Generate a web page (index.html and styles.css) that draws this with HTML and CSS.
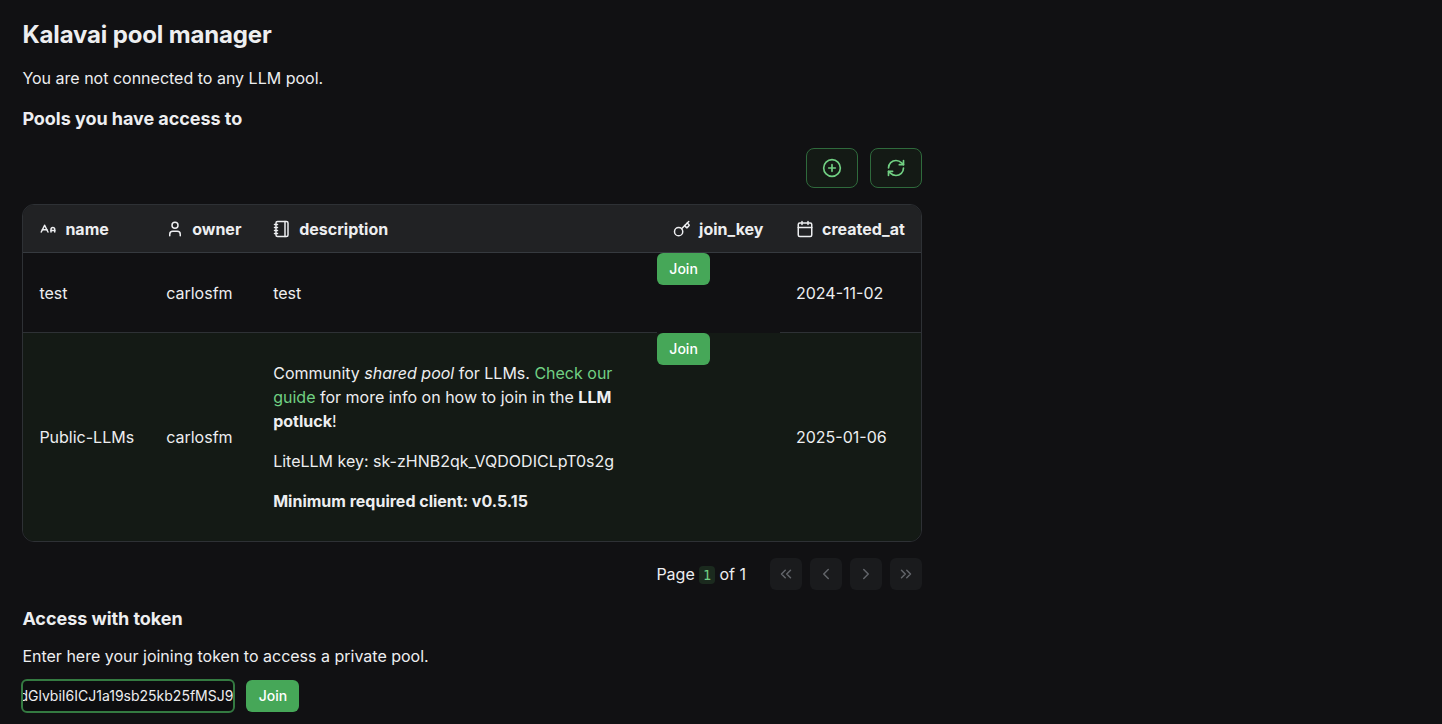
FILE: index.html
```html
<!DOCTYPE html>
<html lang="en">
<head>
<meta charset="utf-8">
<title>Kalavai pool manager</title>
<link rel="stylesheet" href="styles.css">
</head>
<body>
<main class="page">
  <h1 class="title">Kalavai pool manager</h1>
  <p class="status">You are not connected to any LLM pool.</p>
  <h2 class="section">Pools you have access to</h2>
  <div class="toolbar">
    <button class="tool" aria-label="Add"><svg class="icon20" viewBox="0 0 24 24"><circle cx="12" cy="12" r="10"/><path d="M8 12h8M12 8v8"/></svg></button>
    <button class="tool" aria-label="Refresh"><svg class="icon20" viewBox="0 0 24 24"><path d="M3 12a9 9 0 0 1 9-9 9.75 9.75 0 0 1 6.74 2.74L21 8"/><path d="M21 3v5h-5"/><path d="M21 12a9 9 0 0 1-9 9 9.75 9.75 0 0 1-6.74-2.74L3 16"/><path d="M8 16H3v5"/></svg></button>
  </div>
  <div class="table">
    <div class="row head">
      <div class="cell"><svg class="icon18" viewBox="0 0 24 24"><path d="M21 14h-5"/><path d="M16 16v-3.5a2.5 2.5 0 0 1 5 0V16"/><path d="M4.5 13h6"/><path d="m3 16 4.5-9 4.5 9"/></svg><span>name</span></div>
      <div class="cell"><svg class="icon18" viewBox="0 0 24 24"><path d="M19 21v-2a4 4 0 0 0-4-4H9a4 4 0 0 0-4 4v2"/><circle cx="12" cy="7" r="4"/></svg><span>owner</span></div>
      <div class="cell"><svg class="icon18" viewBox="0 0 24 24"><path d="M2 6h4M2 10h4M2 14h4M2 18h4"/><rect width="16" height="20" x="4" y="2" rx="2"/><path d="M16 2v20"/></svg><span>description</span></div>
      <div class="cell"><svg class="icon18" viewBox="0 0 24 24"><path d="m15.5 7.5 2.3 2.3a1 1 0 0 0 1.4 0l2.1-2.1a1 1 0 0 0 0-1.4L19 4"/><path d="m21 2-9.6 9.6"/><circle cx="7.5" cy="15.5" r="5.5"/></svg><span>join_key</span></div>
      <div class="cell"><svg class="icon18" viewBox="0 0 24 24"><path d="M8 2v4M16 2v4"/><rect width="18" height="18" x="3" y="4" rx="2"/><path d="M3 10h18"/></svg><span>created_at</span></div>
    </div>
    <div class="row first">
      <div class="cell">test</div>
      <div class="cell">carlosfm</div>
      <div class="cell">test</div>
      <div class="action"><button class="join">Join</button></div>
      <div class="cell">2024-11-02</div>
    </div>
    <div class="row selected">
      <div class="cell">Public-LLMs</div>
      <div class="cell">carlosfm</div>
      <div class="cell prose">
        <p>Community <em>shared pool</em> for LLMs. <a class="link">Check our guide</a> for more info on how to join in the <strong>LLM potluck</strong>!</p>
        <p>LiteLLM key: sk-zHNB2qk_VQDODICLpT0s2g</p>
        <p><strong>Minimum required client: v0.5.15</strong></p>
      </div>
      <div class="action"><button class="join">Join</button></div>
      <div class="cell">2025-01-06</div>
    </div>
  </div>
  <div class="pager">
    <span class="pages">Page <code class="num">1</code> of 1</span>
    <button class="nav" aria-label="First"><svg class="icon18" viewBox="0 0 24 24"><path d="m11 17-5-5 5-5M18 17l-5-5 5-5"/></svg></button>
    <button class="nav" aria-label="Previous"><svg class="icon18" viewBox="0 0 24 24"><path d="m15 18-6-6 6-6"/></svg></button>
    <button class="nav" aria-label="Next"><svg class="icon18" viewBox="0 0 24 24"><path d="m9 18 6-6-6-6"/></svg></button>
    <button class="nav" aria-label="Last"><svg class="icon18" viewBox="0 0 24 24"><path d="m6 17 5-5-5-5M13 17l5-5-5-5"/></svg></button>
  </div>
  <h2 class="section access">Access with token</h2>
  <p class="hint">Enter here your joining token to access a private pool.</p>
  <div class="token-row">
    <div class="token"><span>dGlvbiI6ICJ1a19sb25kb25fMSJ9</span></div>
    <button class="join">Join</button>
  </div>
</main>
</body>
</html>
```
FILE: styles.css
```css
* { box-sizing: border-box; }
body {
  margin: 0;
  height: 724px;
  overflow: hidden;
  background: #111113;
  color: #edeef0;
  font: 400 16px/24px Inter, sans-serif;
}
h1, h2, p { margin: 0; }
button { font-family: inherit; margin: 0; padding: 0; border: 0; }
svg { fill: none; stroke: currentColor; stroke-width: 2; stroke-linecap: round; stroke-linejoin: round; flex: none; }
.icon18 { width: 18px; height: 18px; }
.icon20 { width: 20px; height: 20px; }
.page { width: 922.4px; padding: 20px 0 0 22.4px; }
.title { font-size: 24px; line-height: 30px; font-weight: 700; letter-spacing: -0.15px; }
.status { margin-top: 16px; }
.section { margin-top: 16px; font-size: 18px; line-height: 26px; font-weight: 700; letter-spacing: -0.045px; }
.toolbar { display: flex; justify-content: flex-end; gap: 12px; margin-top: 16px; }
.tool {
  display: flex; align-items: center; justify-content: center;
  width: 52px; height: 40px;
  color: #71d083;
  background: #141a15;
  border: 1px solid #2f6a3c;
  border-radius: 8px;
}
.table { margin-top: 16px; border: 1px solid #2e3135; border-radius: 12px; overflow: hidden; }
.row { display: grid; grid-template-columns: 126.8px 107px 399.9px 122.9px 141.4px; }
.cell { display: flex; align-items: center; padding: 12px 16px; }
.head { height: 48px; background: #212224; font-weight: 700; border-bottom: 1px solid #363a3f; }
.head .cell { gap: 8px; padding: 12px 16px; }
.first { height: 80px; }
.first .cell { border-bottom: 1px solid #2e3135; }
.selected { height: 208px; background: #141a15; }
.prose { flex-direction: column; align-items: flex-start; justify-content: center; gap: 16px; padding-right: 40px; }
.link { color: #71d083; }
.action { display: flex; align-items: flex-start; }
.join {
  width: 53px; height: 32px;
  border-radius: 6px;
  background: #46a758;
  color: #fff;
  font-size: 14px; line-height: 20px; font-weight: 500;
}
.pager { display: flex; justify-content: flex-end; align-items: center; gap: 8px; margin-top: 16px; }
.pages { margin-right: 16.4px; }
.num {
  display: inline-block;
  padding: 0 3.8px;
  border-radius: 4px;
  background: #1b2a1e;
  color: #71d083;
  font: 13.5px/18px "DejaVu Sans Mono", monospace;
}
.nav {
  display: flex; align-items: center; justify-content: center;
  width: 32px; height: 32px;
  border-radius: 6px;
  background: #1a1b1d;
  color: #62656a;
}
.hint { margin-top: 12px; }
.token-row { display: flex; align-items: center; gap: 11px; margin: 11px 0 0 -1px; }
.token {
  display: flex; align-items: center; justify-content: flex-end;
  width: 214px; height: 34px;
  overflow: hidden;
  border: 2px solid #347a41;
  border-radius: 6px;
  background: #0d0d0f;
  font-size: 14px; line-height: 20px;
}
```
